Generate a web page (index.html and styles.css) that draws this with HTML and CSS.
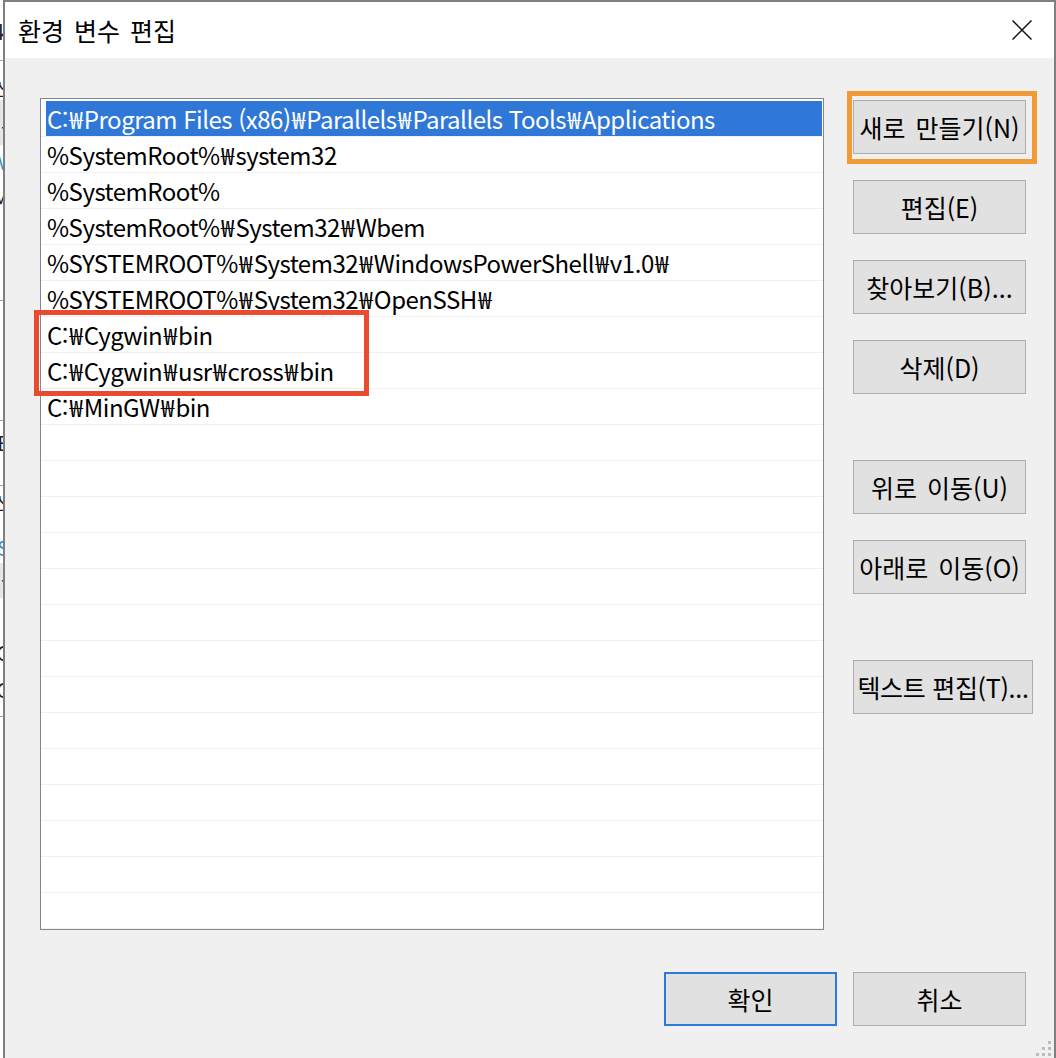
FILE: index.html
```html
<!DOCTYPE html>
<html lang="ko">
<head>
<meta charset="utf-8">
<title>환경 변수 편집</title>
<link rel="stylesheet" href="styles.css">
</head>
<body>
<div class="behind">
  <div class="b-line l1"></div>
  <div class="b-band k1"></div>
  <div class="b-line l2"></div>
  <div class="b-line l3"></div>
  <div class="b-line l4"></div>
  <div class="b-band k2"></div>
  <div class="b-line l5"></div>
  <span class="frag g1">k</span>
  <span class="frag g2">스</span>
  <span class="frag g3">t</span>
  <span class="frag g4 blue">V</span>
  <span class="frag g5">M</span>
  <span class="frag g6">E</span>
  <span class="frag g7">스</span>
  <span class="frag g8 blue">S</span>
  <span class="frag g9">t</span>
  <span class="frag g10">C</span>
  <span class="frag g11">C</span>
</div>
<div class="dialog">
  <div class="titlebar">
    <div class="title">환경 변수 편집</div>
    <button class="close" aria-label="닫기">
      <svg width="20" height="20" viewBox="0 0 20 20"><path d="M0.5 0.5 L19.5 19.5 M19.5 0.5 L0.5 19.5" stroke="#111" stroke-width="1.5" fill="none"/></svg>
    </button>
  </div>
  <div class="content">
    <div class="main">
      <div class="list-wrap">
        <div class="list">
          <div class="row sel"><div class="cell">C:<span class="w">₩</span>Program Files (x86)<span class="w">₩</span>Parallels<span class="w">₩</span>Parallels Tools<span class="w">₩</span>Applications</div></div>
          <div class="row"><div class="cell">%SystemRoot%<span class="w">₩</span>system32</div></div>
          <div class="row"><div class="cell">%SystemRoot%</div></div>
          <div class="row"><div class="cell">%SystemRoot%<span class="w">₩</span>System32<span class="w">₩</span>Wbem</div></div>
          <div class="row"><div class="cell">%SYSTEMROOT%<span class="w">₩</span>System32<span class="w">₩</span>WindowsPowerShell<span class="w">₩</span>v1.0<span class="w">₩</span></div></div>
          <div class="row"><div class="cell">%SYSTEMROOT%<span class="w">₩</span>System32<span class="w">₩</span>OpenSSH<span class="w">₩</span></div></div>
          <div class="row"><div class="cell">C:<span class="w">₩</span>Cygwin<span class="w">₩</span>bin</div></div>
          <div class="row"><div class="cell">C:<span class="w">₩</span>Cygwin<span class="w">₩</span>usr<span class="w">₩</span>cross<span class="w">₩</span>bin</div></div>
          <div class="row"><div class="cell">C:<span class="w">₩</span>MinGW<span class="w">₩</span>bin</div></div>
          <div class="row"><div class="cell"></div></div>
          <div class="row"><div class="cell"></div></div>
          <div class="row"><div class="cell"></div></div>
          <div class="row"><div class="cell"></div></div>
          <div class="row"><div class="cell"></div></div>
          <div class="row"><div class="cell"></div></div>
          <div class="row"><div class="cell"></div></div>
          <div class="row"><div class="cell"></div></div>
          <div class="row"><div class="cell"></div></div>
          <div class="row"><div class="cell"></div></div>
          <div class="row"><div class="cell"></div></div>
          <div class="row"><div class="cell"></div></div>
          <div class="row"><div class="cell"></div></div>
          <div class="row"><div class="cell"></div></div>
        </div>
        <div class="mark-red"></div>
      </div>
      <div class="side">
        <div class="btn-wrap">
          <button class="btn">새로 만들기(N)</button>
          <div class="mark-orange"></div>
        </div>
        <button class="btn">편집(E)</button>
        <button class="btn">찾아보기(B)...</button>
        <button class="btn">삭제(D)</button>
        <button class="btn group">위로 이동(U)</button>
        <button class="btn">아래로 이동(O)</button>
        <button class="btn group wide">텍스트 편집(T)...</button>
      </div>
    </div>
    <div class="footer">
      <button class="btn default">확인</button>
      <button class="btn">취소</button>
    </div>
    <svg class="grip" width="16" height="16" viewBox="0 0 16 16">
      <rect x="12" y="0" width="3" height="3" fill="#bdbdbd"/>
      <rect x="6" y="6" width="3" height="3" fill="#bdbdbd"/>
      <rect x="12" y="6" width="3" height="3" fill="#bdbdbd"/>
      <rect x="0" y="12" width="3" height="3" fill="#bdbdbd"/>
      <rect x="6" y="12" width="3" height="3" fill="#bdbdbd"/>
      <rect x="12" y="12" width="3" height="3" fill="#bdbdbd"/>
    </svg>
  </div>
</div>
</body>
</html>
```

FILE: styles.css
```css
* {
  box-sizing: border-box;
}

html, body {
  margin: 0;
  padding: 0;
  height: 1058px;
  overflow: hidden;
}

body {
  display: flex;
  background: #ffffff;
  font-family: "Noto Sans CJK KR", "Noto Sans", sans-serif;
  color: #000;
}

/* window behind the dialog, only a 3px sliver visible */
.behind {
  position: relative;
  flex: 0 0 3px;
  overflow: hidden;
  background: #ffffff;
}

.b-line {
  position: absolute;
  left: 0;
  width: 3px;
  height: 1px;
  background: #a0a0a0;
}
.l1 { top: 60px; }
.l2 { top: 300px; }
.l3 { top: 420px; }
.l4 { top: 485px; }
.l5 { top: 716px; }

.b-band {
  position: absolute;
  left: 0;
  width: 3px;
  background: #e6e6e6;
}
.k1 { top: 100px; height: 45px; }
.k2 { top: 563px; height: 35px; }

.frag {
  position: absolute;
  right: -6px;
  font-size: 20px;
  line-height: 20px;
  color: #222;
}
.frag.blue { color: #3c8fd0; }
.g1 { top: 22px; }
.g2 { top: 80px; }
.g3 { top: 120px; }
.g4 { top: 152px; }
.g5 { top: 188px; }
.g6 { top: 433px; }
.g7 { top: 494px; }
.g8 { top: 538px; }
.g9 { top: 573px; }
.g10 { top: 643px; }
.g11 { top: 680px; }

/* dialog */
.dialog {
  position: relative;
  flex: 1 1 auto;
  min-width: 0;
  display: flex;
  flex-direction: column;
  border: 2px solid #7f7f7f;
  border-bottom: none;
  background: #f0f0f0;
}

.titlebar {
  display: flex;
  align-items: center;
  height: 56px;
  background: #ffffff;
  padding-left: 13px;
}

.title {
  flex: 1;
  font-size: 25px;
  line-height: 32px;
  word-spacing: 3px;
}

.close {
  width: 64px;
  height: 56px;
  border: none;
  background: transparent;
  padding: 0;
  display: flex;
  align-items: center;
  justify-content: center;
}

.content {
  flex: 1;
  position: relative;
  padding: 40px 28px 0 35px;
}

.main {
  display: flex;
  align-items: flex-start;
}

.list-wrap {
  position: relative;
  width: 784px;
  height: 832px;
  flex: none;
}

.list {
  height: 100%;
  border: 1px solid #828790;
  background: #ffffff;
  padding-top: 2px;
  overflow: hidden;
}

.row {
  height: 36px;
  border-bottom: 1px solid #f0f0f0;
}

.cell {
  height: 35px;
  margin: 0 1px 0 5px;
  padding-left: 1px;
  font-size: 24px;
  line-height: 35px;
  letter-spacing: -0.5px;
  white-space: nowrap;
}

.w {
  margin: 0 1.5px;
}

.row.sel .cell {
  background: #3078d7;
  color: #ffffff;
}

.mark-red {
  position: absolute;
  left: -6px;
  top: 212px;
  width: 335px;
  height: 86px;
  border: 5px solid #e94b2e;
}

.side {
  flex: none;
  width: 173px;
  margin-left: 29px;
  padding-top: 2px;
  display: flex;
  flex-direction: column;
  align-items: flex-start;
  gap: 26px;
}

.btn-wrap {
  position: relative;
}

.mark-orange {
  position: absolute;
  left: -6px;
  top: -9px;
  width: 190px;
  height: 73px;
  border: 5px solid #f19b38;
}

.btn {
  flex: none;
  width: 173px;
  height: 54px;
  border: 1px solid #adadad;
  background: #e1e1e1;
  font-family: "Noto Sans CJK KR", "Noto Sans", sans-serif;
  font-size: 25px;
  word-spacing: 3px;
  color: #000;
  padding: 0;
  white-space: nowrap;
  display: block;
}

.btn.group {
  margin-top: 40px;
}

.btn.wide {
  width: 180px;
  word-spacing: 0;
  letter-spacing: -0.3px;
}

.btn.default {
  border: 2px solid #2b79d8;
}

.footer {
  margin-top: 42px;
  display: flex;
  justify-content: flex-end;
  gap: 16px;
}

.grip {
  position: absolute;
  right: 2px;
  bottom: 1px;
}
```
